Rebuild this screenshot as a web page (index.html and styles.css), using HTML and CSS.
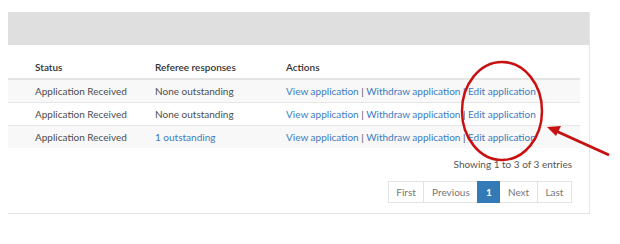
FILE: index.html
```html
<!DOCTYPE html>
<html>
<head>
<meta charset="utf-8">
<link rel="stylesheet" href="styles.css">
</head>
<body>
<div class="panel">
  <div class="panel-head"></div>
  <div class="panel-body">
    <table class="grid">
      <colgroup><col class="w1"><col class="w2"><col></colgroup>
      <thead>
        <tr><th>Status</th><th>Referee responses</th><th>Actions</th></tr>
      </thead>
      <tbody>
        <tr class="odd"><td>Application Received</td><td>None outstanding</td><td><a>View application</a> | <a>Withdraw application</a> | <a>Edit application</a></td></tr>
        <tr><td>Application Received</td><td>None outstanding</td><td><a>View application</a> | <a>Withdraw application</a> | <a>Edit application</a></td></tr>
        <tr class="odd"><td>Application Received</td><td><a>1 outstanding</a></td><td><a>View application</a> | <a>Withdraw application</a> | <a>Edit application</a></td></tr>
      </tbody>
    </table>
    <div class="info">Showing 1 to 3 of 3 entries</div>
    <div class="pager">
      <span class="pg">First</span><span class="pg">Previous</span><span class="pg active">1</span><span class="pg">Next</span><span class="pg">Last</span>
    </div>
  </div>
</div>
<svg class="annot" width="620" height="244" viewBox="0 0 620 244">
  <ellipse cx="502" cy="111" rx="40" ry="49" fill="none" stroke="#c81010" stroke-width="2.5"/>
  <line x1="609" y1="155" x2="556" y2="131" stroke="#c81010" stroke-width="3"/>
  <polygon points="547,127 561,126 556,136" fill="#c81010"/>
</svg>
</body>
</html>
```
FILE: styles.css
```css
html, body { margin: 0; padding: 0; background: #fff; }
body {
  width: 620px; height: 244px; overflow: hidden; position: relative;
  font-family: Lato, "Open Sans", sans-serif; font-size: 10px; color: #555;
}
.panel {
  margin: 12px 0 0 8px; width: 581px;
  border-right: 1px solid #e6e6e6; border-bottom: 1px solid #e3e3e3;
}
.panel-head { height: 33px; background: #dfdfdf; }
.panel-body { padding: 10px 9px 10px 0; }
.grid { width: 572px; border-collapse: collapse; table-layout: fixed; white-space: nowrap; }
.grid col.w1 { width: 147px; }
.grid col.w2 { width: 131px; }
.grid th {
  text-align: left; font-weight: 600; color: #333; height: 23px; padding: 0;
  border-bottom: 2px solid #e4e4e4; vertical-align: middle;
}
.grid td { height: 22px; padding: 0; border-top: 1px solid #e6e6e6; vertical-align: middle; color: #4d4d4d; }
.grid tbody tr:first-child td { border-top: 0; }
.grid th:first-child, .grid td:first-child { padding-left: 27px; }
.grid tr.odd td { background: #f8f8f8; }
.grid a { color: #3b7bbf; }
.info { text-align: right; padding: 10px 8px 0 0; height: 14px; color: #555; }
.pager { display: flex; justify-content: flex-end; margin-top: 9px; padding-right: 8px; }
.pg {
  height: 22px; line-height: 20px; padding: 0 7.6px; border: 1px solid #e3e3e3;
  margin-left: -1px; color: #777; background: #fff; box-sizing: border-box;
}
.pg.active { background: #337ab7; border-color: #337ab7; color: #fff; font-weight: 700; position: relative; }
.annot { position: absolute; left: 0; top: 0; }
```
